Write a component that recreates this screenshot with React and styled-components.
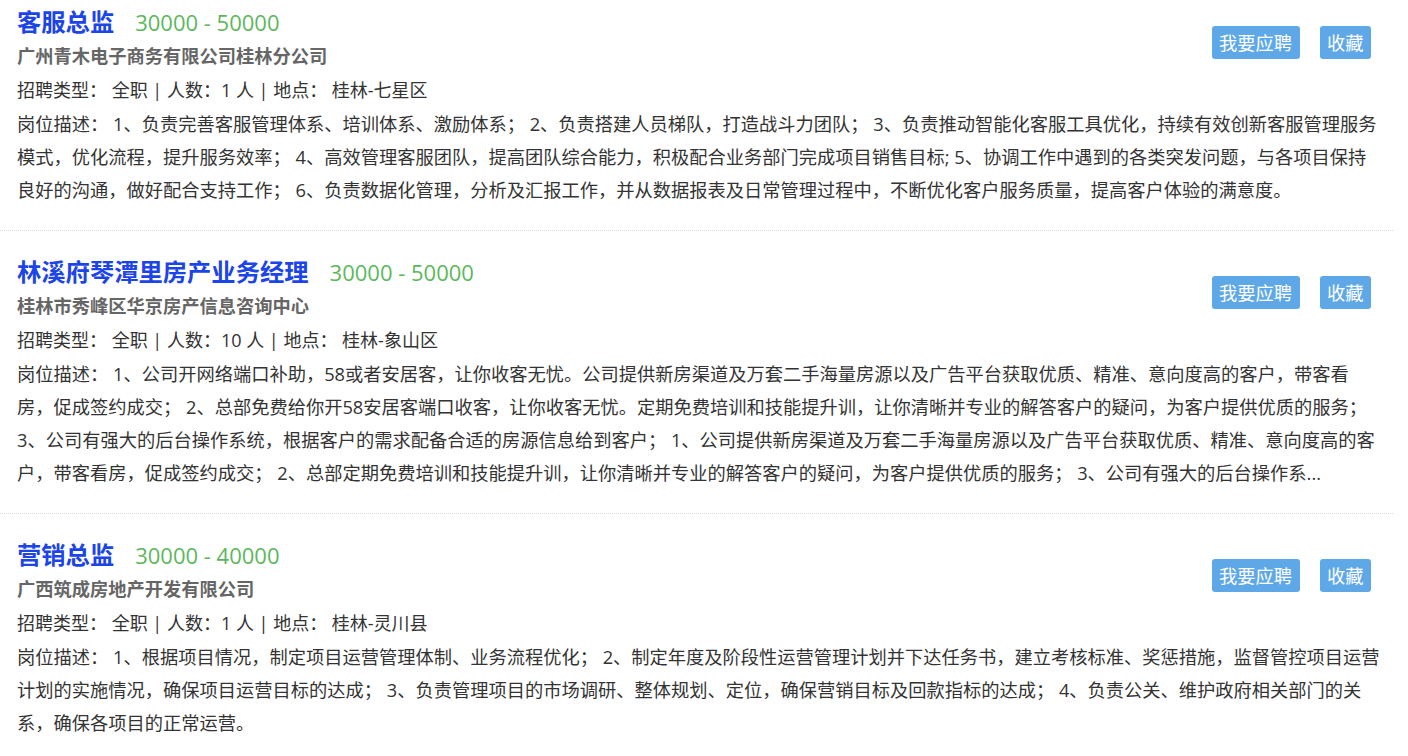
import React from "react";
import styled, { createGlobalStyle } from "styled-components";

const GlobalStyle = createGlobalStyle`
  html, body {
    margin: 0;
    padding: 0;
    background: #ffffff;
  }
  body {
    font-family: "Open Sans", "Noto Sans CJK SC", "Liberation Sans", sans-serif;
    color: #333333;
    overflow: hidden;
  }
`;

const List = styled.div`
  width: 1393px;
  margin-top: -19px;
`;

const Card = styled.div`
  padding: 24px 12px 24px 17px;
  border-bottom: 1px dotted #d8d8d8;
`;

const Head = styled.div`
  display: flex;
  justify-content: space-between;
  align-items: flex-start;
`;

const Main = styled.div`
  display: flex;
  flex-direction: column;
`;

const TitleRow = styled.div`
  display: flex;
  align-items: baseline;
  gap: 21px;
  height: 34px;
  line-height: 34px;
`;

const Title = styled.a`
  font-size: 24.3px;
  font-weight: 700;
  color: #1b44e9;
  text-decoration: none;
`;

const Salary = styled.span`
  font-size: 22px;
  color: #5cb85c;
`;

const Company = styled.div`
  font-size: 18.25px;
  font-weight: 700;
  color: #666666;
  line-height: 34px;
`;

const Info = styled.div`
  font-size: 18px;
  color: #333333;
  line-height: 34px;
`;

const Actions = styled.div`
  display: flex;
  gap: 20px;
  margin-top: 21px;
  margin-right: 10px;
`;

const Button = styled.button`
  height: 33px;
  padding: 0 7.5px;
  border: none;
  border-radius: 3px;
  background: #5fa8e8;
  color: #ffffff;
  font-family: inherit;
  font-size: 18.25px;
  line-height: 33px;
  cursor: pointer;
`;

const Desc = styled.div`
  font-size: 18.25px;
  line-height: 33px;
  color: #333333;
`;

const jobs = [
  {
    title: "客服总监",
    salary: "30000 - 50000",
    company: "广州青木电子商务有限公司桂林分公司",
    count: "1",
    place: "桂林-七星区",
    desc:
      "岗位描述： 1、负责完善客服管理体系、培训体系、激励体系； 2、负责搭建人员梯队，打造战斗力团队； 3、负责推动智能化客服工具优化，持续有效创新客服管理服务模式，优化流程，提升服务效率； 4、高效管理客服团队，提高团队综合能力，积极配合业务部门完成项目销售目标; 5、协调工作中遇到的各类突发问题，与各项目保持良好的沟通，做好配合支持工作； 6、负责数据化管理，分析及汇报工作，并从数据报表及日常管理过程中，不断优化客户服务质量，提高客户体验的满意度。",
  },
  {
    title: "林溪府琴潭里房产业务经理",
    salary: "30000 - 50000",
    company: "桂林市秀峰区华京房产信息咨询中心",
    count: "10",
    place: "桂林-象山区",
    desc:
      "岗位描述： 1、公司开网络端口补助，58或者安居客，让你收客无忧。公司提供新房渠道及万套二手海量房源以及广告平台获取优质、精准、意向度高的客户，带客看房，促成签约成交； 2、总部免费给你开58安居客端口收客，让你收客无忧。定期免费培训和技能提升训，让你清晰并专业的解答客户的疑问，为客户提供优质的服务； 3、公司有强大的后台操作系统，根据客户的需求配备合适的房源信息给到客户； 1、公司提供新房渠道及万套二手海量房源以及广告平台获取优质、精准、意向度高的客户，带客看房，促成签约成交； 2、总部定期免费培训和技能提升训，让你清晰并专业的解答客户的疑问，为客户提供优质的服务； 3、公司有强大的后台操作系...",
  },
  {
    title: "营销总监",
    salary: "30000 - 40000",
    company: "广西筑成房地产开发有限公司",
    count: "1",
    place: "桂林-灵川县",
    desc:
      "岗位描述： 1、根据项目情况，制定项目运营管理体制、业务流程优化； 2、制定年度及阶段性运营管理计划并下达任务书，建立考核标准、奖惩措施，监督管控项目运营计划的实施情况，确保项目运营目标的达成； 3、负责管理项目的市场调研、整体规划、定位，确保营销目标及回款指标的达成； 4、负责公关、维护政府相关部门的关系，确保各项目的正常运营。",
  },
];

function JobCard({ job }) {
  return (
    <Card>
      <Head>
        <Main>
          <TitleRow>
            <Title href="#">{job.title}</Title>
            <Salary>{job.salary}</Salary>
          </TitleRow>
          <Company>{job.company}</Company>
          <Info>
            招聘类型： 全职 | 人数：{job.count} 人 | 地点： {job.place}
          </Info>
        </Main>
        <Actions>
          <Button>我要应聘</Button>
          <Button>收藏</Button>
        </Actions>
      </Head>
      <Desc>{job.desc}</Desc>
    </Card>
  );
}

export default function App() {
  return (
    <>
      <GlobalStyle />
      <List>
        {jobs.map((job) => (
          <JobCard key={job.title} job={job} />
        ))}
      </List>
    </>
  );
}
